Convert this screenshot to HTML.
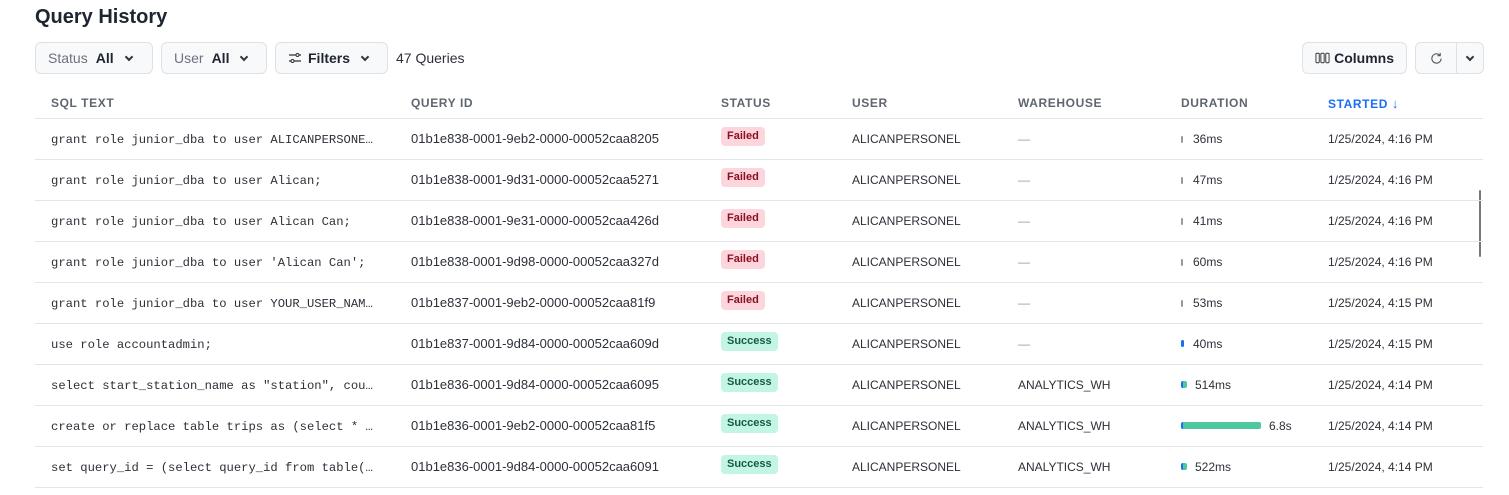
<!DOCTYPE html>
<html><head><meta charset="utf-8"><style>
*{margin:0;padding:0;box-sizing:border-box}
body{width:1509px;height:495px;overflow:hidden;background:#fff;font-family:"Liberation Sans",sans-serif;color:#1f2328;position:relative}
.a{position:absolute;white-space:nowrap}
h1{position:absolute;left:35px;top:6px;font-size:20px;font-weight:700;color:#1e2530}
.btn{position:absolute;top:42px;height:32px;border:1px solid #dfe1e5;border-radius:6px;background:#f8f9fa;font-size:14px;display:flex;align-items:center;padding:0 12px;color:#1e2530}
.btn .l{color:#6b7280;margin-right:8px}
.btn b{margin-right:12px}
.chev{width:6px;height:6px;border-right:2px solid #333;border-bottom:2px solid #333;transform:rotate(45deg);margin-top:-3px}
.hd{position:absolute;top:96px;font-size:12px;font-weight:700;color:#5f6670;letter-spacing:.6px}
.line{position:absolute;left:35px;width:1448px;height:1px;background:#e3e5e8}
.c{position:absolute;font-size:12px;color:#2c3038;white-space:nowrap}
.sql{font-family:"Liberation Mono",monospace;font-size:12.2px;color:#2c3038}
.qid{font-size:13px}
.badge{position:absolute;height:19px;border-radius:4px;font-size:11px;font-weight:700;padding:0 6px;line-height:19px}
.f{background:#fcd5dd;color:#8a1020}
.s{background:#c3f5e5;color:#155a44}
.bar{position:absolute;height:7px;border-radius:2px}
</style></head><body>
<h1>Query History</h1>
<div class="btn" style="left:35px;width:118px"><span class="l">Status</span><b>All</b><span class="chev"></span></div>
<div class="btn" style="left:161px;width:106px"><span class="l">User</span><b>All</b><span class="chev"></span></div>
<div class="btn" style="left:275px;width:113px"><svg width="14" height="12" style="margin-right:6px" viewBox="0 0 14 12"><path d="M1 3h7M11 3h2M1 9h2M6 9h7" stroke="#333" stroke-width="1.3" fill="none"/><circle cx="9.5" cy="3" r="1.5" stroke="#333" fill="none"/><circle cx="4.5" cy="9" r="1.5" stroke="#333" fill="none"/></svg><b>Filters</b><span class="chev"></span></div>
<div class="a" style="left:396px;top:50px;font-size:14px;color:#2c3038">47 Queries</div>
<div class="btn" style="left:1302px;width:105px;padding:0 12px"><svg width="16" height="12" style="margin-right:4px" viewBox="0 0 16 12"><rect x="1" y="1" width="3.5" height="10" rx="1" stroke="#333" fill="none"/><rect x="6.2" y="1" width="3.5" height="10" rx="1" stroke="#333" fill="none"/><rect x="11.4" y="1" width="3.5" height="10" rx="1" stroke="#333" fill="none"/></svg><b style="margin:0">Columns</b></div>
<div class="btn" style="left:1415px;width:69px;padding:0"><div style="width:41px;height:100%;border-right:1px solid #dfe1e5;display:flex;align-items:center;justify-content:center"><svg width="13" height="13" viewBox="0 0 14 14"><path d="M12 7a5 5 0 1 1-1.5-3.6M11 1v3H8" stroke="#555" stroke-width="1.2" fill="none"/></svg></div><div style="flex:1;display:flex;justify-content:center"><span class="chev"></span></div></div>
<div class="hd" style="left:51px">SQL TEXT</div>
<div class="hd" style="left:411px">QUERY ID</div>
<div class="hd" style="left:721px">STATUS</div>
<div class="hd" style="left:852px">USER</div>
<div class="hd" style="left:1018px">WAREHOUSE</div>
<div class="hd" style="left:1181px">DURATION</div>
<div class="hd" style="left:1328px;color:#1a6ef5">STARTED <span style="font-size:13px">↓</span></div>
<div style="position:absolute;left:1479px;top:190px;width:2px;height:67px;background:#777;border-radius:1px"></div>
<div id="rows"></div>
<script>
var R=[["grant role junior_dba to user ALICANPERSONE…","01b1e838-0001-9eb2-0000-00052caa8205",0,"—","36ms","1/25/2024, 4:16 PM",0],
["grant role junior_dba to user Alican;","01b1e838-0001-9d31-0000-00052caa5271",0,"—","47ms","1/25/2024, 4:16 PM",0],
["grant role junior_dba to user Alican Can;","01b1e838-0001-9e31-0000-00052caa426d",0,"—","41ms","1/25/2024, 4:16 PM",0],
["grant role junior_dba to user 'Alican Can';","01b1e838-0001-9d98-0000-00052caa327d",0,"—","60ms","1/25/2024, 4:16 PM",0],
["grant role junior_dba to user YOUR_USER_NAM…","01b1e837-0001-9eb2-0000-00052caa81f9",0,"—","53ms","1/25/2024, 4:15 PM",0],
["use role accountadmin;","01b1e837-0001-9d84-0000-00052caa609d",1,"—","40ms","1/25/2024, 4:15 PM",1],
["select start_station_name as \"station\", cou…","01b1e836-0001-9d84-0000-00052caa6095",1,"ANALYTICS_WH","514ms","1/25/2024, 4:14 PM",2],
["create or replace table trips as (select * …","01b1e836-0001-9eb2-0000-00052caa81f5",1,"ANALYTICS_WH","6.8s","1/25/2024, 4:14 PM",3],
["set query_id = (select query_id from table(…","01b1e836-0001-9d84-0000-00052caa6091",1,"ANALYTICS_WH","522ms","1/25/2024, 4:14 PM",2]];
var h='<div class="line" style="top:118px"></div>';
R.forEach(function(r,i){var y=118+i*41,t=y+14;
h+='<div class="c sql" style="left:51px;top:'+(t+1)+'px">'+r[0].replace(/</g,'&lt;')+'</div>';
h+='<div class="c qid" style="left:411px;top:'+(t-1)+'px">'+r[1]+'</div>';
h+='<div class="badge '+(r[2]?'s':'f')+'" style="left:721px;top:'+(y+9)+'px">'+(r[2]?'Success':'Failed')+'</div>';
h+='<div class="c" style="left:852px;top:'+t+'px">ALICANPERSONEL</div>';
h+='<div class="c" style="left:1018px;top:'+t+'px;'+(r[3]=='—'?'color:#999':'')+'">'+r[3]+'</div>';
var by=y+21,dx=1193;
if(r[6]==0)h+='<div class="bar" style="left:1181px;top:'+(by-3)+'px;width:2px;background:#999"></div>';
else if(r[6]==1)h+='<div class="bar" style="left:1181px;top:'+(by-4)+'px;width:3px;background:#1a6ef5"></div>';
else if(r[6]==2){h+='<div class="bar" style="left:1181px;top:'+(by-4)+'px;width:6px;background:#4fc8a0;border-left:2px solid #1a6ef5"></div>';dx=1195;}
else{h+='<div class="bar" style="left:1181px;top:'+(by-4)+'px;width:80px;background:#4fc8a0;border-left:2px solid #1a6ef5"></div>';dx=1269;}
h+='<div class="c" style="left:'+dx+'px;top:'+t+'px">'+r[4]+'</div>';
h+='<div class="c" style="left:1328px;top:'+t+'px">'+r[5]+'</div>';
h+='<div class="line" style="top:'+(y+41)+'px"></div>';});
document.getElementById('rows').innerHTML=h;
</script>
</body></html>
